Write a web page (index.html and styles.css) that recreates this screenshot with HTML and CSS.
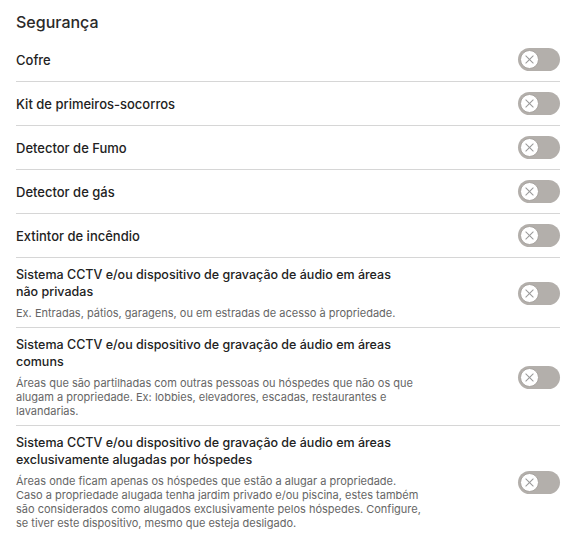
FILE: index.html
```html
<!DOCTYPE html>
<html lang="pt">
<head>
  <meta charset="UTF-8">
  <meta name="viewport" content="width=device-width, initial-scale=1.0">
  <title>Segurança</title>
  <link rel="stylesheet" href="styles.css">
</head>
<body>
  <div class="section">
    <h2 class="section-title">Segurança</h2>
    <ul class="list">
      <li class="item">
        <div class="text"><p class="label">Cofre</p></div>
        <span class="toggle"><span class="knob"></span></span>
      </li>
      <li class="item">
        <div class="text"><p class="label">Kit de primeiros-socorros</p></div>
        <span class="toggle"><span class="knob"></span></span>
      </li>
      <li class="item">
        <div class="text"><p class="label">Detector de Fumo</p></div>
        <span class="toggle"><span class="knob"></span></span>
      </li>
      <li class="item">
        <div class="text"><p class="label">Detector de gás</p></div>
        <span class="toggle"><span class="knob"></span></span>
      </li>
      <li class="item">
        <div class="text"><p class="label">Extintor de incêndio</p></div>
        <span class="toggle"><span class="knob"></span></span>
      </li>
      <li class="item item-long">
        <div class="text">
          <p class="label">Sistema CCTV e/ou dispositivo de gravação de áudio em áreas não privadas</p>
          <p class="desc">Ex. Entradas, pátios, garagens, ou em estradas de acesso à propriedade.</p>
        </div>
        <span class="toggle"><span class="knob"></span></span>
      </li>
      <li class="item item-long">
        <div class="text">
          <p class="label">Sistema CCTV e/ou dispositivo de gravação de áudio em áreas comuns</p>
          <p class="desc">Áreas que são partilhadas com outras pessoas ou hóspedes que não os que alugam a propriedade. Ex: lobbies, elevadores, escadas, restaurantes e lavandarias.</p>
        </div>
        <span class="toggle"><span class="knob"></span></span>
      </li>
      <li class="item item-long">
        <div class="text">
          <p class="label">Sistema CCTV e/ou dispositivo de gravação de áudio em áreas exclusivamente alugadas por hóspedes</p>
          <p class="desc">Áreas onde ficam apenas os hóspedes que estão a alugar a propriedade. Caso a propriedade alugada tenha jardim privado e/ou piscina, estes também são considerados como alugados exclusivamente pelos hóspedes. Configure, se tiver este dispositivo, mesmo que esteja desligado.</p>
        </div>
        <span class="toggle"><span class="knob"></span></span>
      </li>
    </ul>
  </div>
</body>
</html>
```

FILE: styles.css
```css
body {
  font-family: Inter, 'Noto Sans', sans-serif;
  margin: 0;
  padding: 0;
  background-color: #fff;
  color: #222;
}
.section {
  padding: 12px 14px 0 16px;
}
.section-title {
  font-size: 16px;
  font-weight: 500;
  line-height: 20px;
  margin: 0 0 6px;
  color: #2a2a2a;
}
.list {
  list-style: none;
  margin: 0;
  padding: 0;
}
.item {
  display: flex;
  align-items: center;
  justify-content: space-between;
  padding: 10px 0;
  border-bottom: 1px solid #d6d6d6;
}
.item:last-child {
  border-bottom: none;
}
.item-long {
  padding: 8px 0 7px;
}
.text {
  width: 406px;
}
.label {
  font-size: 13px;
  font-weight: 500;
  line-height: 18px;
  margin: 0;
  color: #222;
}
.item-long .label {
  max-width: 400px;
  font-size: 12.5px;
  line-height: 17px;
}
.desc {
  font-size: 11px;
  line-height: 14px;
  margin: 6px 0 0;
  color: #666;
}
.toggle {
  display: block;
  width: 42px;
  height: 23px;
  border-radius: 12px;
  background-color: #b3afab;
  position: relative;
  flex-shrink: 0;
}
.knob {
  position: absolute;
  left: 2px;
  top: 2px;
  width: 17px;
  height: 17px;
  border-radius: 50%;
  background-color: #fff;
  border: 1px solid #a8a4a0;
}
.knob::before, .knob::after {
  content: '';
  position: absolute;
  left: 3px;
  top: 8px;
  width: 11px;
  height: 1px;
  background-color: #999;
  transform: rotate(45deg);
}
.knob::after {
  transform: rotate(-45deg);
}
```
